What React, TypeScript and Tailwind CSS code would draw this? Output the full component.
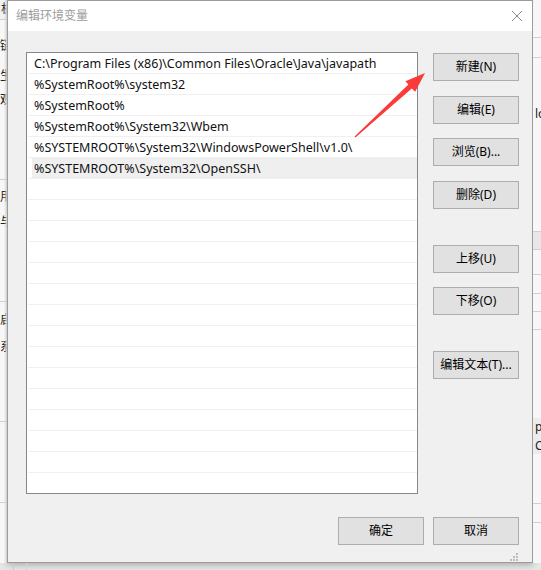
import React from 'react';

const paths = [
  'C:\\Program Files (x86)\\Common Files\\Oracle\\Java\\javapath',
  '%SystemRoot%\\system32',
  '%SystemRoot%',
  '%SystemRoot%\\System32\\Wbem',
  '%SYSTEMROOT%\\System32\\WindowsPowerShell\\v1.0\\',
  '%SYSTEMROOT%\\System32\\OpenSSH\\',
];

const font = "font-['Noto_Sans','Noto_Sans_CJK_SC',sans-serif]";

function Btn({ label, className = '' }: { label: string; className?: string }) {
  return (
    <button
      className={`h-[28px] w-[86px] shrink-0 border border-[#adadad] bg-[#e1e1e1] text-[12px] leading-none text-black ${className}`}
    >
      {label}
    </button>
  );
}

// strip of the window that sits behind the dialog, on the left
function LeftStrip() {
  return (
    <div className="relative h-[563px] w-[7px] shrink-0 overflow-hidden bg-[#f7f7f7] text-[12px] leading-none text-[#222]">
      <div className="h-[20px] border-b border-[#d0d0d0] bg-[#eef3f8] pl-[1px] pt-[3px]">机</div>
      <div className="h-[160px] border-b border-[#d0d0d0] pt-[20px]">
        <div className="h-[30px]">链</div>
        <div className="h-[24px]">生</div>
        <div>观</div>
      </div>
      <div className="h-[122px] border-b border-[#d0d0d0] pt-[11px]">
        <div className="h-[25px]">用</div>
        <div>与</div>
      </div>
      <div className="h-[120px] border-b border-[#d0d0d0] pt-[12px]">
        <div className="h-[27px]">启</div>
        <div>系</div>
      </div>
      <div className="h-[81px] border-b border-[#d0d0d0]" />
      <div className="absolute inset-y-0 right-0 w-[3px] bg-gradient-to-r from-transparent to-[#cfcfcf]" />
    </div>
  );
}

function RightStrip() {
  return (
    <div className="h-[563px] w-[8px] shrink-0 overflow-hidden bg-[#f7f7f7] text-[12px] leading-none text-[#222]">
      <div className="h-[38px] border-b border-[#d0d0d0]" />
      <div className="h-[20px] border-b border-[#d0d0d0]" />
      <div className="h-[26px]" />
      <div className="h-[148px] border-b border-[#d0d0d0] pl-[2px] pt-[24px]">lo</div>
      <div className="h-[18px] border-b border-[#d0d0d0] bg-[#e8e8e8]" />
      <div className="h-[25px] border-b border-[#d0d0d0]" />
      <div className="h-[19px] border-b border-[#d0d0d0]" />
      <div className="h-[18px] border-b border-[#d0d0d0]" />
      <div className="h-[18px] border-b border-[#d0d0d0]" />
      <div className="h-[88px]" />
      <div className="h-[36px] bg-[#ececec] pl-[2px] pt-[3px]">
        <div className="h-[19px]">p</div>
        <div>C</div>
      </div>
      <div className="h-[50px] border-b border-[#d0d0d0]" />
      <div className="h-[19px] border-b border-[#d0d0d0]" />
    </div>
  );
}

function PathList() {
  const rows = Array.from({ length: 21 }, (_, i) => paths[i] ?? '');
  return (
    <div className="h-[442px] w-[392px] shrink-0 overflow-hidden border border-[#828790] bg-white">
      {rows.map((p, i) => (
        <div key={i} className="ml-px h-[21px] border-b border-[#f0f0f0]">
          <div
            className={`ml-[4px] h-[20px] whitespace-nowrap pl-[2px] pt-[3px] text-[12.5px] leading-[15px] text-[#111] ${
              i === 5 ? 'bg-[#efefef]' : ''
            }`}
          >
            {p}
          </div>
        </div>
      ))}
    </div>
  );
}

export default function App() {
  return (
    <div className={`relative h-[570px] w-[541px] overflow-hidden bg-[#f7f7f7] ${font}`}>
      <div className="flex">
        <LeftStrip />
        {/* dialog */}
        <div className="flex h-[563px] w-[526px] shrink-0 flex-col border border-[#9b9b9b] bg-[#f0f0f0] shadow-[0_2px_6px_rgba(0,0,0,0.25)]">
          <div className="flex h-[30px] shrink-0 items-center justify-between bg-white pl-[8px] pr-[8px]">
            <span className="text-[12px] text-[#9d9d9d]">编辑环境变量</span>
            <svg width="12" height="12" viewBox="0 0 12 12" className="mr-[1px]">
              <path d="M1 1 L11 11 M11 1 L1 11" stroke="#8a8a8a" strokeWidth="1" fill="none" />
            </svg>
          </div>
          <div className="flex flex-1 flex-col pl-[18px] pr-[13px] pt-[21px]">
            <div className="flex gap-[15px]">
              <PathList />
              <div className="flex flex-col pt-px">
                <Btn label="新建(N)" />
                <Btn label="编辑(E)" className="mt-[15px]" />
                <Btn label="浏览(B)..." className="mt-[14px]" />
                <Btn label="删除(D)" className="mt-[15px]" />
                <Btn label="上移(U)" className="mt-[36px]" />
                <Btn label="下移(O)" className="mt-[14px]" />
                <Btn label="编辑文本(T)..." className="mt-[36px]" />
              </div>
            </div>
            <div className="mt-[23px] flex justify-end gap-[9px]">
              <Btn label="确定" />
              <Btn label="取消" />
            </div>
            <div className="flex justify-end pr-[1px] pt-[8px]">
              <svg width="8" height="8" viewBox="0 0 8 8">
                <rect x="6" y="0" width="2" height="2" fill="#bdbdbd" />
                <rect x="3" y="3" width="2" height="2" fill="#bdbdbd" />
                <rect x="6" y="3" width="2" height="2" fill="#bdbdbd" />
                <rect x="0" y="6" width="2" height="2" fill="#bdbdbd" />
                <rect x="3" y="6" width="2" height="2" fill="#bdbdbd" />
                <rect x="6" y="6" width="2" height="2" fill="#bdbdbd" />
              </svg>
            </div>
          </div>
        </div>
        <RightStrip />
      </div>
      {/* bottom strip of the window behind */}
      <div className="flex h-[7px] bg-[#e6e6e6]">
        <div className="w-[14px] border-r border-[#c8c8c8]" />
        <div className="w-[13px] border-r border-[#d4d4d4]" />
      </div>
      {/* red annotation arrow */}
      <svg className="pointer-events-none absolute left-0 top-0" width="541" height="570">
        <polygon
          points="354.6,136.6 408.4,84.6 405.4,81.2 425,73 415.2,91.8 411.8,88.4 355.4,137.4"
          fill="#fb3a3a"
        />
      </svg>
    </div>
  );
}
